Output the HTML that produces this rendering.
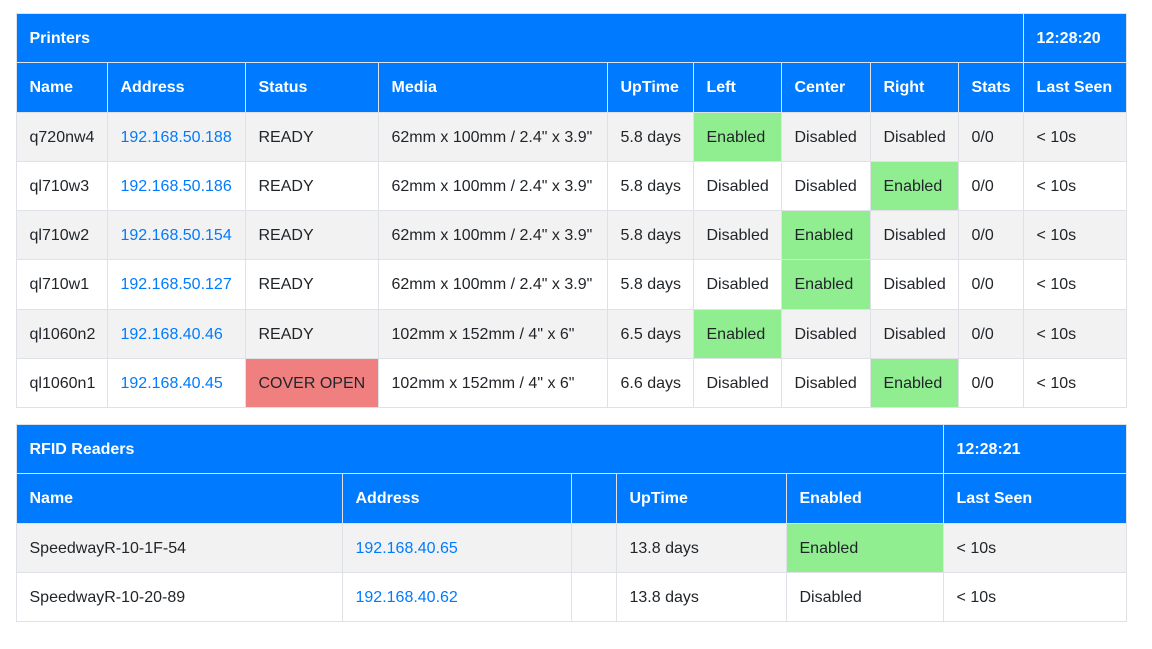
<!DOCTYPE html>
<html><head><meta charset="utf-8"><style>
body{margin:0;background:#fff;font-family:"Liberation Sans",Arial,sans-serif;font-size:16px;color:#212529}
table{position:absolute;left:16px;width:1110px;border-collapse:collapse;table-layout:fixed}
td,th{border:1px solid #dee2e6;padding:13px 12px 11.3px 12.5px;line-height:24px;text-align:left;white-space:nowrap;overflow:hidden}
th{background:#007bff;color:#fff;font-weight:bold}
tbody tr:nth-child(odd) td{background:#f2f2f2}
a{color:#007bff;text-decoration:none}
td.g{background:#90ee90!important}
td.r{background:#f08080!important}
</style></head><body>
<table style="top:13px">
<colgroup><col style="width:91px"><col style="width:138px"><col style="width:133px"><col style="width:229px"><col style="width:86px"><col style="width:88px"><col style="width:89px"><col style="width:88px"><col style="width:65px"><col style="width:103px"></colgroup>
<thead><tr><th colspan="9">Printers</th><th>12:28:20</th></tr>
<tr><th>Name</th><th>Address</th><th>Status</th><th>Media</th><th>UpTime</th><th>Left</th><th>Center</th><th>Right</th><th>Stats</th><th>Last Seen</th></tr></thead>
<tbody>
<tr><td>q720nw4</td><td><a>192.168.50.188</a></td><td>READY</td><td>62mm x 100mm / 2.4" x 3.9"</td><td>5.8 days</td><td class="g">Enabled</td><td>Disabled</td><td>Disabled</td><td>0/0</td><td>&lt; 10s</td></tr>
<tr><td>ql710w3</td><td><a>192.168.50.186</a></td><td>READY</td><td>62mm x 100mm / 2.4" x 3.9"</td><td>5.8 days</td><td>Disabled</td><td>Disabled</td><td class="g">Enabled</td><td>0/0</td><td>&lt; 10s</td></tr>
<tr><td>ql710w2</td><td><a>192.168.50.154</a></td><td>READY</td><td>62mm x 100mm / 2.4" x 3.9"</td><td>5.8 days</td><td>Disabled</td><td class="g">Enabled</td><td>Disabled</td><td>0/0</td><td>&lt; 10s</td></tr>
<tr><td>ql710w1</td><td><a>192.168.50.127</a></td><td>READY</td><td>62mm x 100mm / 2.4" x 3.9"</td><td>5.8 days</td><td>Disabled</td><td class="g">Enabled</td><td>Disabled</td><td>0/0</td><td>&lt; 10s</td></tr>
<tr><td>ql1060n2</td><td><a>192.168.40.46</a></td><td>READY</td><td>102mm x 152mm / 4" x 6"</td><td>6.5 days</td><td class="g">Enabled</td><td>Disabled</td><td>Disabled</td><td>0/0</td><td>&lt; 10s</td></tr>
<tr><td>ql1060n1</td><td><a>192.168.40.45</a></td><td class="r">COVER OPEN</td><td>102mm x 152mm / 4" x 6"</td><td>6.6 days</td><td>Disabled</td><td>Disabled</td><td class="g">Enabled</td><td>0/0</td><td>&lt; 10s</td></tr>
</tbody></table>
<table style="top:424px">
<colgroup><col style="width:326px"><col style="width:229px"><col style="width:45px"><col style="width:170px"><col style="width:157px"><col style="width:183px"></colgroup>
<thead><tr><th colspan="5">RFID Readers</th><th>12:28:21</th></tr>
<tr><th>Name</th><th>Address</th><th></th><th>UpTime</th><th>Enabled</th><th>Last Seen</th></tr></thead>
<tbody>
<tr><td>SpeedwayR-10-1F-54</td><td><a>192.168.40.65</a></td><td></td><td>13.8 days</td><td class="g">Enabled</td><td>&lt; 10s</td></tr>
<tr><td>SpeedwayR-10-20-89</td><td><a>192.168.40.62</a></td><td></td><td>13.8 days</td><td>Disabled</td><td>&lt; 10s</td></tr>
</tbody></table>
</body></html>
